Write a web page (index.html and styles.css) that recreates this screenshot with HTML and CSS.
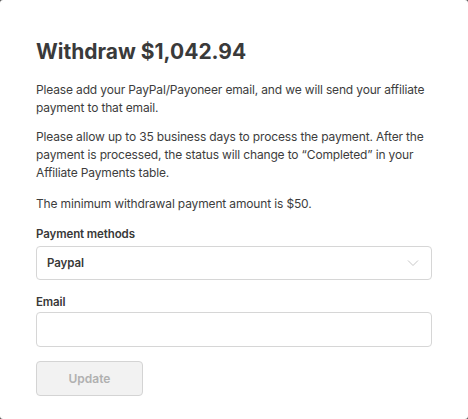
FILE: index.html
```html
<!DOCTYPE html>
<html>
<head>
<meta charset="utf-8">
<link rel="stylesheet" href="styles.css">
</head>
<body>
<div class="card">
  <h1 class="title">Withdraw $1,042.94</h1>
  <p class="text p1">Please add your PayPal/Payoneer email, and we will send your affiliate payment to that email.</p>
  <p class="text p2">Please allow up to 35 business days to process the payment. After the payment is processed, the status will change to “Completed” in your Affiliate Payments table.</p>
  <p class="text p3">The minimum withdrawal payment amount is $50.</p>
  <div class="field">
    <div class="label">Payment methods</div>
    <div class="select">
      <span class="select-value">Paypal</span>
      <svg class="chev" width="12" height="8" viewBox="0 0 12 8"><path d="M1 1.5 L6 6.5 L11 1.5" fill="none" stroke="#c8c8c8" stroke-width="1"/></svg>
    </div>
  </div>
  <div class="field">
    <div class="label label-email">Email</div>
    <div class="input"></div>
  </div>
  <button class="btn">Update</button>
</div>
</body>
</html>
```
FILE: styles.css
```css
html, body {
  margin: 0;
  padding: 0;
  background: #555;
}
body {
  width: 468px;
  height: 419px;
  font-family: Inter, "Noto Sans", sans-serif;
  color: #3b3b3b;
}
.card {
  box-sizing: border-box;
  width: 468px;
  height: 419px;
  background: #fff;
  border-radius: 3px;
  padding: 38px 36px 0 36px;
}
.title {
  margin: 0 0 15px 0;
  font-size: 21px;
  font-weight: 700;
  line-height: 28px;
  color: #3a3a3a;
}
.text {
  margin: 0;
  font-size: 12px;
  line-height: 18px;
  letter-spacing: -0.15px;
  color: #3d3d3d;
}
.p1 { margin-bottom: 11px; }
.p2 { margin-bottom: 13px; }
.label {
  font-size: 11.5px;
  font-weight: 600;
  letter-spacing: -0.1px;
  line-height: 18px;
  margin-top: 12px;
  margin-bottom: 3px;
  color: #383838;
}
.label-email {
  margin-top: 13px;
  margin-bottom: 1px;
}
.select {
  box-sizing: border-box;
  height: 34px;
  border: 1px solid #d6d6d6;
  border-radius: 4px;
  display: flex;
  align-items: center;
  justify-content: space-between;
  padding: 0 12px 0 10px;
}
.select-value {
  font-size: 11.5px;
  font-weight: 600;
  letter-spacing: -0.1px;
  color: #383838;
}
.input {
  box-sizing: border-box;
  height: 35px;
  border: 1px solid #d6d6d6;
  border-radius: 4px;
}
.btn {
  display: block;
  box-sizing: border-box;
  margin-top: 14px;
  width: 107px;
  height: 35px;
  background: #f2f2f2;
  border: 1px solid #d4d4d4;
  border-radius: 4px;
  font-family: Inter, sans-serif;
  font-size: 12px;
  font-weight: 600;
  color: #b0b0b0;
  padding: 0;
}
```
